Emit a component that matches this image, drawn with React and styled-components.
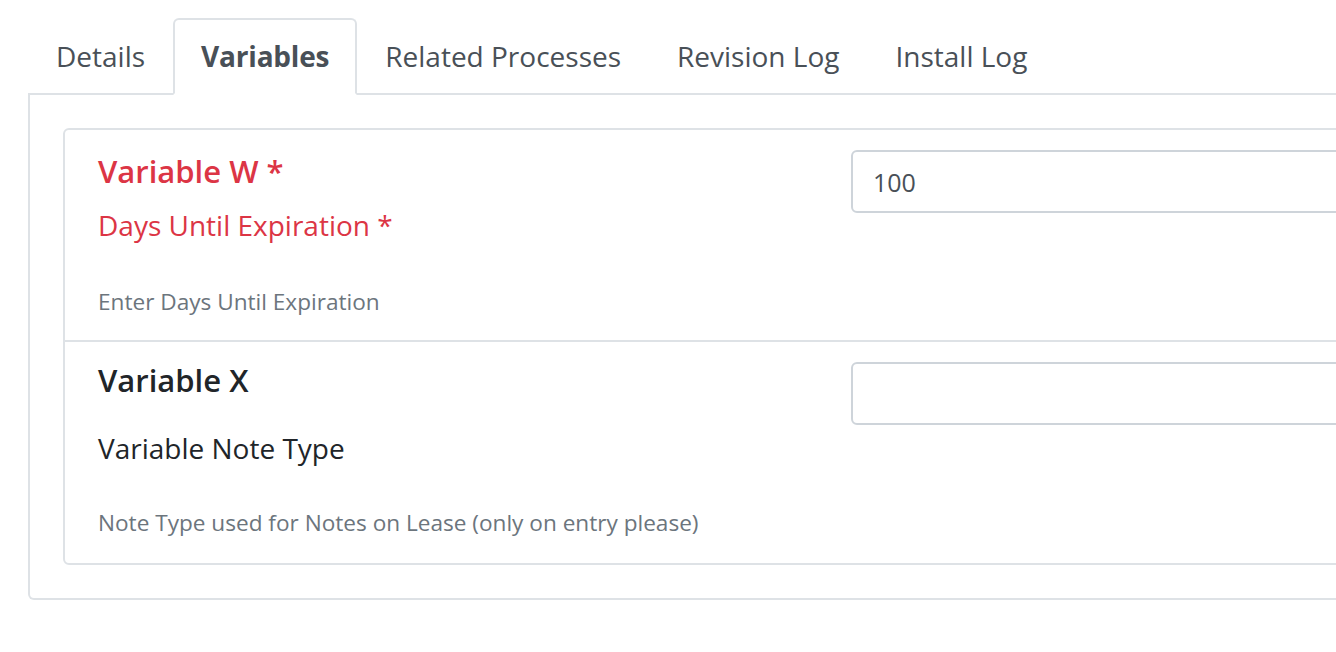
import React from "react";
import styled, { createGlobalStyle } from "styled-components";

const GlobalStyle = createGlobalStyle`
  html, body {
    margin: 0;
    padding: 0;
    background: #fff;
    overflow: hidden;
  }
  body {
    font-family: "Open Sans", "Noto Sans", sans-serif;
    color: #212529;
  }
`;

const Page = styled.div`
  width: 1700px;
  padding: 18px 0 0 28px;
`;

const Nav = styled.ul`
  display: flex;
  list-style: none;
  margin: 0;
  padding: 0;
  border-bottom: 2px solid #dee2e6;
`;

const Tab = styled.li`
  margin-bottom: -2px;
  padding: 14px 26px 14px;
  font-size: 28px;
  line-height: 45px;
  color: #495057;
  font-weight: ${(p) => (p.$active ? 700 : 400)};
  letter-spacing: ${(p) => (p.$active ? "-0.2px" : "0")};
  border: 2px solid ${(p) => (p.$active ? "#dee2e6" : "transparent")};
  border-bottom-color: ${(p) => (p.$active ? "#fff" : "transparent")};
  border-radius: 6px 6px 0 0;
  background: ${(p) => (p.$active ? "#fff" : "transparent")};
  white-space: nowrap;
`;

const TabPane = styled.div`
  border: 2px solid #dee2e6;
  border-top: none;
  border-radius: 0 0 6px 6px;
  padding: 33px 33px 33px;
`;

const Card = styled.div`
  border: 2px solid #dee2e6;
  border-radius: 6px;
`;

const Row = styled.div`
  display: grid;
  grid-template-columns: 718px 1fr;
  column-gap: 35px;
  padding: 20px 33px ${(p) => p.$bottom}px;
  & + & {
    border-top: 2px solid #dee2e6;
  }
`;

const LabelCol = styled.div`
  display: flex;
  flex-direction: column;
`;

const Title = styled.h5`
  margin: ${(p) => p.$shift}px 0 0;
  font-size: 31px;
  line-height: 42px;
  font-weight: 600;
  color: ${(p) => (p.$invalid ? "#dc3545" : "#212529")};
`;

const Label = styled.label`
  margin-top: ${(p) => p.$gap}px;
  font-size: 28px;
  line-height: 42px;
  color: ${(p) => (p.$invalid ? "#dc3545" : "#212529")};
`;

const Help = styled.small`
  margin-top: ${(p) => p.$gap}px;
  font-size: 22.6px;
  line-height: 30px;
  color: #6c757d;
`;

const Input = styled.input`
  box-sizing: border-box;
  width: 100%;
  height: 63px;
  border: 2px solid #ced4da;
  border-radius: 6px;
  padding: 0 20px;
  font-family: "Open Sans", "Noto Sans", sans-serif;
  font-size: 25px;
  color: #495057;
  outline: none;
`;

const variables = [
  {
    name: "Variable W *",
    label: "Days Until Expiration *",
    help: "Enter Days Until Expiration",
    value: "100",
    invalid: true,
    shift: 0,
    labelGap: 12,
    helpGap: 41,
    bottom: 23,
  },
  {
    name: "Variable X",
    label: "Variable Note Type",
    help: "Note Type used for Notes on Lease (only on entry please)",
    value: "",
    invalid: false,
    shift: -3,
    labelGap: 26,
    helpGap: 39,
    bottom: 25,
  },
];

export default function App() {
  const tabs = ["Details", "Variables", "Related Processes", "Revision Log", "Install Log"];
  return (
    <>
      <GlobalStyle />
      <Page>
        <Nav>
          {tabs.map((t) => (
            <Tab key={t} $active={t === "Variables"}>
              {t}
            </Tab>
          ))}
        </Nav>
        <TabPane>
          <Card>
            {variables.map((v) => (
              <Row key={v.name} $bottom={v.bottom}>
                <LabelCol>
                  <Title $invalid={v.invalid} $shift={v.shift}>
                    {v.name}
                  </Title>
                  <Label $invalid={v.invalid} $gap={v.labelGap}>
                    {v.label}
                  </Label>
                  <Help $gap={v.helpGap}>{v.help}</Help>
                </LabelCol>
                <div>
                  <Input defaultValue={v.value} />
                </div>
              </Row>
            ))}
          </Card>
        </TabPane>
      </Page>
    </>
  );
}
